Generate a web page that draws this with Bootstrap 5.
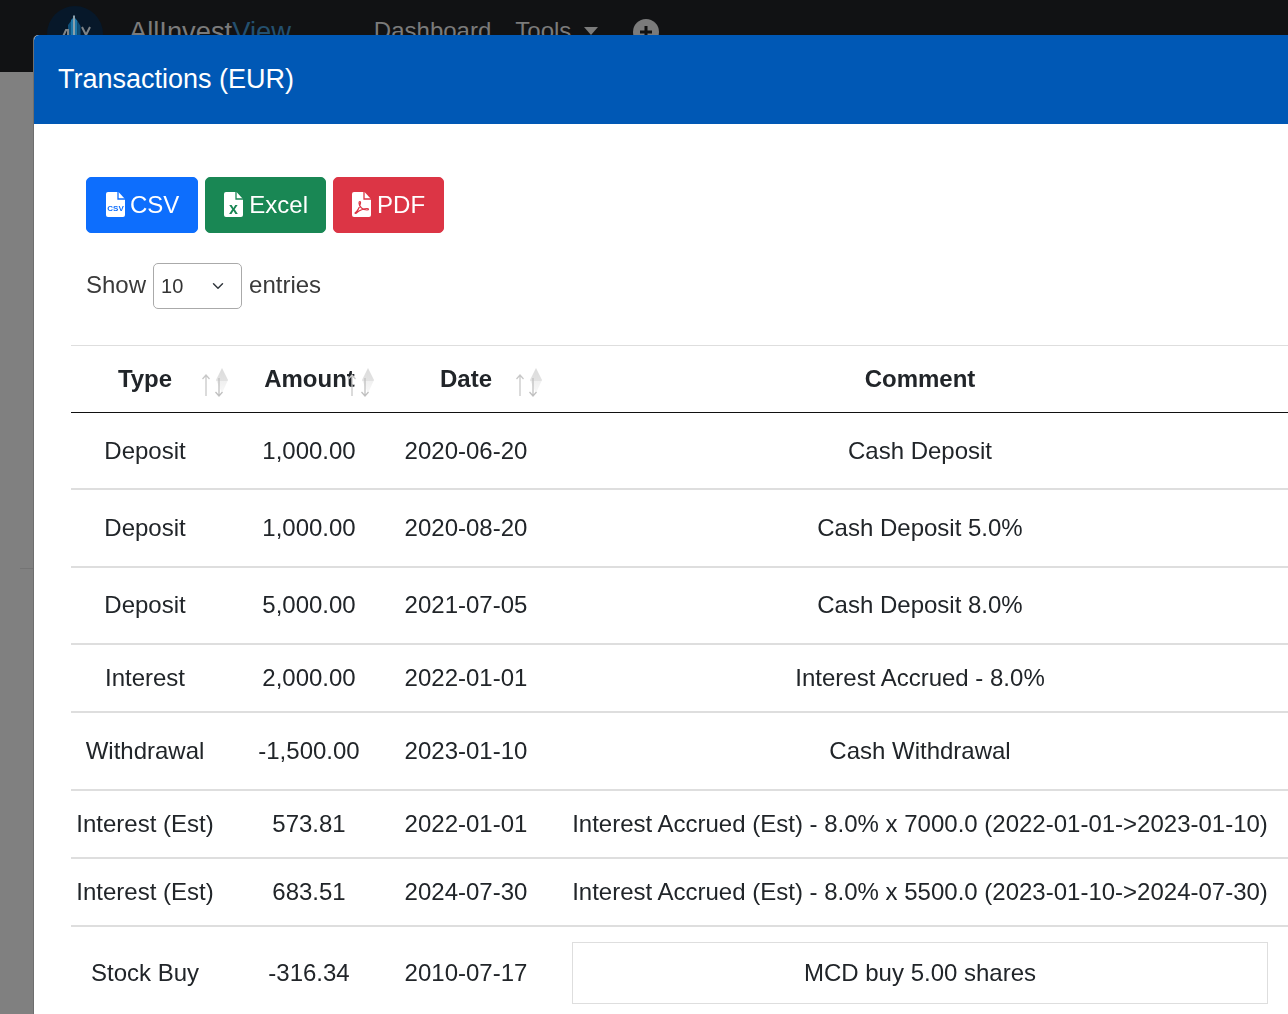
<!DOCTYPE html>
<html lang="en">
<head>
<meta charset="utf-8">
<title>Transactions</title>
<link href="https://cdn.jsdelivr.net/npm/bootstrap@5.3.0/dist/css/bootstrap.min.css" rel="stylesheet">
<style>
html,body{height:100%;overflow:hidden}
body{background:#808080;font-family:"Liberation Sans",Arial,sans-serif;font-size:24px;color:#212529}
.top-bar{height:72px;background:#111214;padding:0 0 0 47px;align-items:flex-start;overflow:hidden}
.logo-disc{width:56px;height:56px;margin-top:6px;flex:none}
.brand-txt{font-size:27.3px;margin-left:26px;margin-top:16px;color:#7b7b7b;line-height:32px}
.brand-txt span{color:#24506f}
.top-link{font-size:24px;color:#7b7b7b;margin-top:17px;line-height:28px}
.link-dash{margin-left:83px}
.link-tools{margin-left:24px}
.caret-ico{margin:27px 0 0 13px}
.plus-ico{margin:19px 0 0 35px}
.page-rule{position:absolute;left:20px;top:568px;border-top:1px solid #747474;width:14px}
.tx-modal{position:fixed;left:34px;top:35px;width:1400px;height:1100px;border:0;background:#fff;border-radius:5px 0 0 0;box-shadow:-1px 0 0 #6e6e6e;overflow:hidden}
.tx-modal .modal-header{height:89px;background:#0058b5;color:#fff;padding:0 24px;border:0;border-radius:5px 0 0 0}
.tx-modal .modal-title{font-size:27px;line-height:1.2;font-family:"Liberation Sans",sans-serif;margin-top:0}
.tx-modal .modal-body{padding:53px 0 0 37px}
.btn-row{padding-left:15px;gap:7px}
.export-btn{font-size:24px;height:56px;line-height:54px;padding:0 18px;border-radius:5px;display:inline-flex;align-items:center;gap:5px}
.export-btn svg{width:19px;height:25px;flex:none;margin-top:-1px}
.csv-btn{padding:0 18px 0 19px}
.excel-btn{padding:0 17px 0 18px;gap:6px}
.pdf-btn{padding:0 18px 0 18px;gap:6px}
.len-row{margin-top:30px;margin-left:15px;color:#3a3a3a;gap:7px;height:46px;line-height:44px}
.len-txt{padding-bottom:2px}
.len-sel{width:89px;height:46px;font-size:20px;padding:0 7px;border:1px solid #aaa;border-radius:5px;color:#333;background-position:right 15px center;background-size:16px 12px;font-family:"Liberation Sans",sans-serif}
.tx-table{table-layout:fixed;width:1336px;border-collapse:collapse;margin:36px 0 0 0;color:#212529}
.tx-table th,.tx-table td{text-align:center;vertical-align:middle;padding:0 5px;white-space:nowrap;font-size:24px;border-bottom:2px solid #dedede}
.tx-table thead th{height:67px;font-weight:700;border-top:1px solid #dedede;border-bottom:1px solid #111;position:relative}
.tx-table thead th.amt-head{padding-right:4px}
.row-tall td{height:77.6px}
.row-first td{height:76.6px}
.row-short td{height:68px}
.row-buy td{height:94px}
.cmt-box{border:1px solid #dedede;height:62px;line-height:60px;margin:0 39px}
.tx-table td.cmt-cell{padding:0}
.sort-arrows{position:absolute;top:21px;width:30px;height:30px}
.sa-type{left:128px}
.sa-amt{left:126px}
.sa-date{left:114px}
.sort-def{display:block;position:absolute;width:0;height:0}
.c1{width:148px}.c2{width:180px}.c3{width:134px}.c4{width:774px}.c5{width:100px}
</style>
</head>
<body>
<nav class="top-bar d-flex">
  <svg class="logo-disc" viewBox="0 0 56 56" aria-hidden="true">
    <circle cx="28" cy="28" r="28" fill="#07182a"/>
    <path d="M26 10l1-1 1 1v24h-2z" fill="#8aa0ac"/>
    <path d="M24 14v20h2V12zM28 12v22h2.500V15z" fill="#1d76a8"/>
    <path d="M21 19v15h3V15zM30.500 15v19h3V20z" fill="#0f4f7a"/>
    <path d="M14 35l5-11 2 0v11M35 21l4 8 4-8M39 29v6" stroke="#7f8488" stroke-width="2" fill="none"/>
  </svg>
  <div class="brand-txt">AllInvest<span>View</span></div>
  <div class="top-link link-dash">Dashboard</div>
  <div class="top-link link-tools">Tools</div>
  <svg class="caret-ico" width="14" height="8" viewBox="0 0 14 8" aria-hidden="true"><path d="M0 0h14L7 8z" fill="#7b7b7b"/></svg>
  <svg class="plus-ico" width="26" height="26" viewBox="0 0 26 26" aria-hidden="true"><circle cx="13" cy="13" r="13" fill="#7b7b7b"/><path d="M13 7v12M7 13h12" stroke="#111" stroke-width="3"/></svg>
</nav>
<div class="page-rule"></div>
<div class="modal-content tx-modal">
  <div class="modal-header"><h5 class="modal-title">Transactions (EUR)</h5></div>
  <div class="modal-body">
    <div class="d-flex btn-row">
      <a class="btn btn-primary export-btn csv-btn">
        <svg viewBox="0 0 19 25" aria-hidden="true"><path d="M2 0h10.500l6.500 7v16a2 2 0 0 1-2 2H2a2 2 0 0 1-2-2V2a2 2 0 0 1 2-2z" fill="#fff"/><path d="M12 0v7h7" fill="none" stroke="#0d6efd" stroke-width="1.300"/><text x="9.500" y="19" text-anchor="middle" font-family="Liberation Sans" font-size="8" font-weight="700" fill="#0d6efd">CSV</text></svg>CSV</a>
      <a class="btn btn-success export-btn excel-btn">
        <svg viewBox="0 0 19 25" aria-hidden="true"><path d="M2 0h10.500l6.500 7v16a2 2 0 0 1-2 2H2a2 2 0 0 1-2-2V2a2 2 0 0 1 2-2z" fill="#fff"/><path d="M12 0v7h7" fill="none" stroke="#198754" stroke-width="1.300"/><text x="9.500" y="22" text-anchor="middle" font-family="Liberation Sans" font-size="16" font-weight="700" fill="#198754">x</text></svg>Excel</a>
      <a class="btn btn-danger export-btn pdf-btn">
        <svg viewBox="0 0 19 25" aria-hidden="true"><path d="M2 0h10.500l6.500 7v16a2 2 0 0 1-2 2H2a2 2 0 0 1-2-2V2a2 2 0 0 1 2-2z" fill="#fff"/><path d="M12 0v7h7" fill="none" stroke="#dc3545" stroke-width="1.300"/><path d="M3 21c2-1 5-6 5.500-10 .2-2-1.500-2-1.500 0 0 4 4 7 8 7 2 0 2-1.500 0-1.500-3 0-8 2-10 4-1 1-2 1-2 .5z" fill="none" stroke="#dc3545" stroke-width="1.200"/></svg>PDF</a>
    </div>
    <div class="len-row d-flex align-items-center">
      <span class="len-txt">Show</span>
      <select class="form-select len-sel" aria-label="entries"><option>10</option></select>
      <span class="len-txt">entries</span>
    </div>
    <table class="tx-table">
      <colgroup><col class="c1"><col class="c2"><col class="c3"><col class="c4"><col class="c5"></colgroup>
      <thead>
        <tr>
          <th>Type<svg class="sort-arrows sa-type" viewBox="0 0 30 30" aria-hidden="true"><use href="#sa"/></svg></th>
          <th class="amt-head">Amount<svg class="sort-arrows sa-amt" viewBox="0 0 30 30" aria-hidden="true"><use href="#sa"/></svg></th>
          <th>Date<svg class="sort-arrows sa-date" viewBox="0 0 30 30" aria-hidden="true"><use href="#sa"/></svg></th>
          <th>Comment</th>
          <th></th>
        </tr>
      </thead>
      <tbody>
        <tr class="row-first"><td>Deposit</td><td>1,000.00</td><td>2020-06-20</td><td>Cash Deposit</td><td></td></tr>
        <tr class="row-tall"><td>Deposit</td><td>1,000.00</td><td>2020-08-20</td><td>Cash Deposit 5.0%</td><td></td></tr>
        <tr class="row-tall"><td>Deposit</td><td>5,000.00</td><td>2021-07-05</td><td>Cash Deposit 8.0%</td><td></td></tr>
        <tr class="row-short"><td>Interest</td><td>2,000.00</td><td>2022-01-01</td><td>Interest Accrued - 8.0%</td><td></td></tr>
        <tr class="row-tall"><td>Withdrawal</td><td>-1,500.00</td><td>2023-01-10</td><td>Cash Withdrawal</td><td></td></tr>
        <tr class="row-short"><td>Interest (Est)</td><td>573.81</td><td>2022-01-01</td><td>Interest Accrued (Est) - 8.0% x 7000.0 (2022-01-01-&gt;2023-01-10)</td><td></td></tr>
        <tr class="row-short"><td>Interest (Est)</td><td>683.51</td><td>2024-07-30</td><td>Interest Accrued (Est) - 8.0% x 5500.0 (2023-01-10-&gt;2024-07-30)</td><td></td></tr>
        <tr class="row-buy"><td>Stock Buy</td><td>-316.34</td><td>2010-07-17</td><td class="cmt-cell"><div class="cmt-box">MCD buy 5.00 shares</div></td><td></td></tr>
      </tbody>
    </table>
  </div>
</div>
<svg class="sort-def" aria-hidden="true"><defs>
  <linearGradient id="sg" x1="0" y1="0" x2="0" y2="1"><stop offset="0" stop-color="#dcdcdc"/><stop offset=".5" stop-color="#e2e2e2"/><stop offset=".52" stop-color="#f0f0f0"/><stop offset="1" stop-color="#f8f8f8"/></linearGradient>
  <g id="sa">
    <path d="M23 1l6 12-6 13-6-13z" fill="url(#sg)"/>
    <path d="M7 8v21M3.500 12L7 8l3.500 4" stroke="#c8c8c8" stroke-width="1.300" fill="none"/>
    <path d="M20 11v18M16.500 25l3.500 4 3.500-4" stroke="#c0c0c0" stroke-width="1.300" fill="none"/>
  </g>
</defs></svg>
<script src="https://cdn.jsdelivr.net/npm/bootstrap@5.3.0/dist/js/bootstrap.bundle.min.js"></script>
</body>
</html>
